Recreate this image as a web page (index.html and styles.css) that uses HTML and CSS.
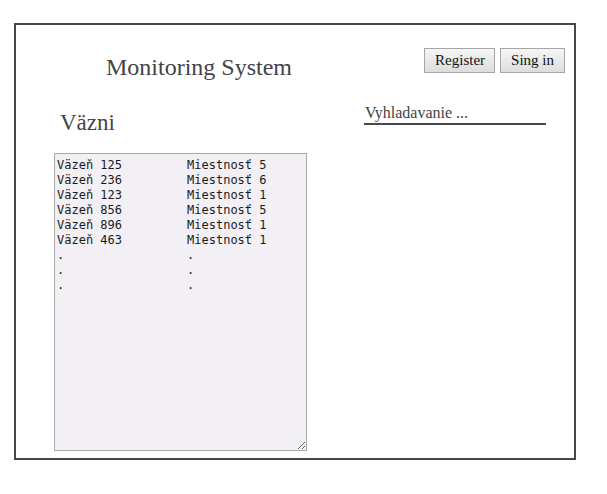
FILE: index.html
```html
<!DOCTYPE html>
<html lang="sk">
<head>
<meta charset="utf-8">
<title>Monitoring System</title>
<link rel="stylesheet" href="styles.css">
</head>
<body>
<div class="frame">
  <header class="top">
    <h1 class="title">Monitoring System</h1>
    <div class="actions">
      <button class="btn" type="button">Register</button>
      <button class="btn" type="button">Sing in</button>
    </div>
  </header>
  <main class="main">
    <section class="list">
      <h2 class="heading">Väzni</h2>
      <textarea class="records">Väzeň 125         Miestnosť 5
Väzeň 236         Miestnosť 6
Väzeň 123         Miestnosť 1
Väzeň 856         Miestnosť 5
Väzeň 896         Miestnosť 1
Väzeň 463         Miestnosť 1
.                 .
.                 .
.                 .</textarea>
    </section>
    <div class="search">
      <input class="search-input" type="text" placeholder="Vyhladavanie ...">
    </div>
  </main>
</div>
</body>
</html>
```
FILE: styles.css
```css
html, body {
  margin: 0;
  padding: 0;
  background: #fff;
}

body {
  font-family: "Liberation Serif", "Times New Roman", serif;
  color: #444;
}

.frame {
  box-sizing: border-box;
  width: 562px;
  height: 437px;
  margin: 23px 0 0 14px;
  border: 2px solid #474747;
  padding-top: 23px;
}

.top {
  display: flex;
  align-items: flex-start;
}

.title {
  margin: 5px 0 0 90px;
  font-size: 24px;
  line-height: 28px;
  font-weight: normal;
  color: #444;
}

.actions {
  margin-left: auto;
  margin-right: 9px;
  display: flex;
  gap: 5px;
}

.btn {
  box-sizing: border-box;
  height: 25px;
  padding: 0 10px;
  font-family: "Liberation Serif", "Times New Roman", serif;
  font-size: 15px;
  color: #111;
  border: 1px solid #a6a6a6;
  border-radius: 0;
  background: linear-gradient(#f6f6f6, #dddddd);
}

.btn:first-child {
  padding: 0 9px 0 10px;
}

.main {
  display: flex;
  align-items: flex-start;
}

.list {
  margin-left: 38px;
  display: flex;
  flex-direction: column;
}

.heading {
  margin: 29px 0 0 6px;
  font-size: 23px;
  line-height: 26px;
  font-weight: normal;
  color: #444;
}

.records {
  box-sizing: border-box;
  width: 253px;
  height: 298px;
  margin-top: 17px;
  padding: 4px 2px 2px 2px;
  border: 1px solid #a9a9a9;
  background: #f3f0f5;
  font-family: "DejaVu Sans Mono", monospace;
  font-size: 12px;
  line-height: 15px;
  color: #1a1a1a;
  white-space: pre;
  overflow: hidden;
}

.search {
  margin: 22px 0 0 57px;
}

.search-input {
  box-sizing: border-box;
  width: 182px;
  height: 22px;
  padding: 0 0 0 1px;
  border: none;
  border-bottom: 2px solid #474747;
  outline: none;
  font-family: "Liberation Serif", "Times New Roman", serif;
  font-size: 16px;
  line-height: 20px;
  color: #444;
  background: transparent;
}

.search-input::placeholder {
  color: #444;
  opacity: 1;
}
```
